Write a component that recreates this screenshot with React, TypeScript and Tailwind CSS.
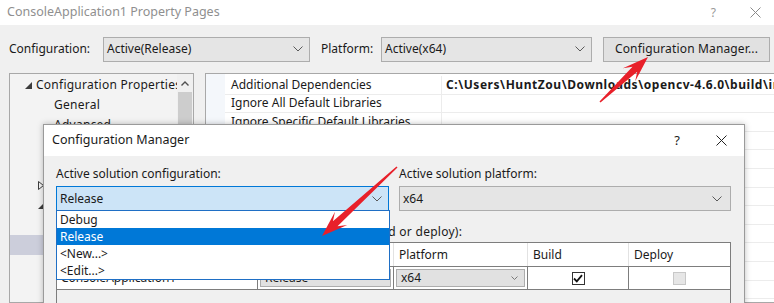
import React from "react"

function Chevron({ small = false }: { small?: boolean }) {
  return small ? (
    <svg width="7" height="4" viewBox="0 0 7 4">
      <path d="M0.5 0.5 L3.5 3.5 L6.5 0.5" fill="none" stroke="#7a7a7a" strokeWidth="1" />
    </svg>
  ) : (
    <svg width="10" height="6" viewBox="0 0 10 6">
      <path d="M0.5 0.5 L5 5 L9.5 0.5" fill="none" stroke="#5a5a5a" strokeWidth="1" />
    </svg>
  )
}

function CloseGlyph({ color }: { color: string }) {
  return (
    <svg width="11" height="11" viewBox="0 0 11 11">
      <path d="M0.5 0.5 L10.5 10.5 M10.5 0.5 L0.5 10.5" stroke={color} strokeWidth="1" />
    </svg>
  )
}

// red markup arrow: thin tail widening into a swept-back head
function arrowPoints(x1: number, y1: number, x2: number, y2: number) {
  const dx = x2 - x1
  const dy = y2 - y1
  const len = Math.hypot(dx, dy)
  const ux = dx / len
  const uy = dy / len
  const nx = -uy
  const ny = ux
  const headLen = 26
  const headW = 9
  const base = { x: x2 - ux * headLen, y: y2 - uy * headLen }
  const neck = { x: x2 - ux * (headLen - 8), y: y2 - uy * (headLen - 8) }
  const pts = [
    [x1 + nx * 0.8, y1 + ny * 0.8],
    [neck.x + nx * 3.4, neck.y + ny * 3.4],
    [base.x + nx * headW, base.y + ny * headW],
    [x2, y2],
    [base.x - nx * headW, base.y - ny * headW],
    [neck.x - nx * 3.4, neck.y - ny * 3.4],
    [x1 - nx * 0.8, y1 - ny * 0.8],
  ]
  return pts.map((p) => p.map((v) => v.toFixed(1)).join(",")).join(" ")
}

const treeRows = [
  { text: "Configuration Properties", pad: "pl-[15px]", icon: "open" },
  { text: "General", pad: "pl-[44px]" },
  { text: "Advanced", pad: "pl-[44px]" },
  { text: "Debugging", pad: "pl-[44px]" },
  { text: "VC++ Directories", pad: "pl-[44px]" },
  { text: "C/C++", pad: "pl-[28px]", icon: "closed" },
  { text: "Linker", pad: "pl-[28px]", icon: "open" },
  { text: "General", pad: "pl-[62px]" },
  { text: "Input", pad: "pl-[62px]", selected: true },
  { text: "Manifest File", pad: "pl-[62px]" },
  { text: "Debugging", pad: "pl-[62px]" },
]

const propRows = [
  { name: "Additional Dependencies", value: "C:\\Users\\HuntZou\\Downloads\\opencv-4.6.0\\build\\include\\opencv_world460.lib" },
  { name: "Ignore All Default Libraries", value: "" },
  { name: "Ignore Specific Default Libraries", value: "" },
  { name: "Module Definition File", value: "" },
  { name: "Add Module to Assembly", value: "" },
  { name: "Embed Managed Resource File", value: "" },
  { name: "Force Symbol References", value: "" },
  { name: "Delay Loaded Dlls", value: "" },
  { name: "Assembly Link Resource", value: "" },
  { name: "", value: "" },
  { name: "", value: "" },
  { name: "", value: "" },
]

function TreeIcon({ kind }: { kind?: string }) {
  if (kind === "open")
    return (
      <span className="flex w-[11px] shrink-0 items-center">
        <svg width="7" height="7" viewBox="0 0 7 7">
          <path d="M7 0 L7 7 L0 7 Z" fill="#3c3c3c" />
        </svg>
      </span>
    )
  if (kind === "closed")
    return (
      <span className="flex w-[16px] shrink-0 items-center">
        <svg width="6" height="9" viewBox="0 0 6 9">
          <path d="M0.5 0.5 L5.5 4.5 L0.5 8.5 Z" fill="none" stroke="#3c3c3c" strokeWidth="1" />
        </svg>
      </span>
    )
  return null
}

export default function App() {
  return (
    <div className="relative h-[303px] w-[774px] overflow-hidden bg-[#f0f0f0] font-['Noto_Sans',sans-serif] text-[12px] text-[#1a1a1a]">
      {/* window title */}
      <div className="flex h-[25px] items-center bg-white pl-[7px] pr-[13px]">
        <span className="text-[12.5px] text-[#8f8f8f]">ConsoleApplication1 Property Pages</span>
        <span className="ml-auto mr-[34px] text-[12px] text-[#999]">?</span>
        <CloseGlyph color="#8a8a8a" />
      </div>

      {/* configuration row */}
      <div className="flex h-[48px] items-center pl-[9px]">
        <span className="w-[94px]">Configuration:</span>
        <div className="flex h-[25px] w-[207px] items-center justify-between border border-[#adadad] bg-[#e5e5e5] pl-[3px] pr-[6px]">
          <span>Active(Release)</span>
          <Chevron />
        </div>
        <span className="ml-[11px] w-[60px]">Platform:</span>
        <div className="flex h-[25px] w-[211px] items-center justify-between border border-[#adadad] bg-[#e5e5e5] pl-[3px] pr-[6px]">
          <span>Active(x64)</span>
          <Chevron />
        </div>
        <button
          type="button"
          className="ml-[11px] flex h-[25px] w-[167px] items-center justify-center border border-[#adadad] bg-[#e1e1e1] tracking-[0.15px]"
        >
          Configuration Manager...
        </button>
      </div>

      {/* panels */}
      <div className="flex h-[230px] pl-[9px]">
        <div className="flex w-[185px] shrink-0 border border-[#a8a8a8] bg-[#f3f3f3]">
          <div className="min-w-0 flex-1 overflow-hidden pt-px">
            {treeRows.map((r, i) => (
              <div
                key={i}
                className={`flex h-[20px] items-center whitespace-nowrap tracking-[0.25px] ${r.pad} ${r.selected ? "bg-[#cccedb]" : ""}`}
              >
                <TreeIcon kind={r.icon} />
                <span>{r.text}</span>
              </div>
            ))}
          </div>
          <div className="flex w-[16px] shrink-0 flex-col bg-[#f0f0f0]">
            <div className="flex h-[18px] items-center justify-center">
              <svg width="8" height="5" viewBox="0 0 8 5">
                <path d="M0.5 4.5 L4 1 L7.5 4.5" fill="none" stroke="#505050" strokeWidth="1.4" />
              </svg>
            </div>
            <div className="mx-px flex-1 bg-[#cdcdcd]" />
          </div>
        </div>

        <div className="ml-[11px] flex w-[600px] shrink-0 border border-[#a8a8a8] bg-white">
          <div className="w-[19px] shrink-0 bg-[#f4f7fb]" />
          <div className="flex-1 pt-[2px]">
            {propRows.map((r, i) => (
              <div key={i} className="flex h-[18.6px] border-b border-[#ececec]">
                <div className="flex w-[216px] shrink-0 items-center pl-[6px] whitespace-nowrap">{r.name}</div>
                <div className="flex flex-1 items-center overflow-hidden border-l border-[#ececec] pl-[4px] font-bold tracking-[0.55px] whitespace-nowrap">
                  {r.value}
                </div>
              </div>
            ))}
          </div>
        </div>
      </div>

      {/* Configuration Manager dialog */}
      <div className="absolute left-[43px] top-[124px] h-[200px] w-[702px] border border-[#9a9a9a] bg-[#f0f0f0] shadow-[0_0_6px_rgba(0,0,0,0.25)]">
        <div className="flex h-[31px] items-center bg-white pl-[8px] pr-[17px]">
          <span className="text-[12.5px]">Configuration Manager</span>
          <span className="ml-auto mr-[36px] text-[13px]">?</span>
          <CloseGlyph color="#222" />
        </div>

        <div className="px-[12px] pt-[10px]">
          <div className="flex gap-[10px]">
            <div className="w-[333px]">
              <div className="h-[16px] leading-[16px]">Active solution configuration:</div>
              <div className="mt-[4px] flex h-[25px] items-center justify-between border border-[#0078d7] bg-[#cce4f7] pl-[3px] pr-[6px]">
                <span>Release</span>
                <Chevron />
              </div>
            </div>
            <div className="w-[332px]">
              <div className="h-[16px] leading-[16px]">Active solution platform:</div>
              <div className="mt-[4px] flex h-[25px] items-center justify-between border border-[#adadad] bg-[#e5e5e5] pl-[3px] pr-[8px]">
                <span>x64</span>
                <Chevron />
              </div>
            </div>
          </div>

          <div className="mt-[13px] h-[16px] leading-[16px] tracking-[0.27px] whitespace-nowrap">
            Project contexts (check the project configurations to build or deploy):
          </div>

          <div className="mt-[2px] h-[80px] w-[675px] border border-[#7d7d7d] bg-[#f0f0f0]">
            <div className="flex h-[24px] border-b border-[#7d7d7d] bg-white">
              <div className="flex w-[201px] items-center border-r border-[#e2e2e2] pl-[5px]">Project</div>
              <div className="flex w-[136px] items-center border-r border-[#e2e2e2] pl-[5px]">Configuration</div>
              <div className="flex w-[134px] items-center border-r border-[#e2e2e2] pl-[5px]">Platform</div>
              <div className="flex w-[101px] items-center border-r border-[#e2e2e2] pl-[5px]">Build</div>
              <div className="flex flex-1 items-center pl-[5px]">Deploy</div>
            </div>
            <div className="flex h-[23px] border-b border-[#7d7d7d] bg-white">
              <div className="flex w-[201px] items-center border-r border-[#7d7d7d] pl-[4px]">ConsoleApplication1</div>
              <div className="flex w-[136px] items-center border-r border-[#7d7d7d] p-[2px]">
                <div className="flex h-full w-full items-center border border-[#adadad] bg-[#e1e1e1] pl-[4px]">Release</div>
              </div>
              <div className="flex w-[134px] items-center border-r border-[#7d7d7d] p-[2px]">
                <div className="flex h-full w-full items-center justify-between border border-[#adadad] bg-[#e1e1e1] pl-[4px] pr-[6px]">
                  <span>x64</span>
                  <Chevron small />
                </div>
              </div>
              <div className="flex w-[101px] items-center justify-center border-r border-[#7d7d7d]">
                <div className="flex h-[13px] w-[13px] items-center justify-center border border-[#333] bg-white">
                  <svg width="10" height="9" viewBox="0 0 10 9">
                    <path d="M1 4.5 L3.8 7.3 L9 1.2" fill="none" stroke="#111" strokeWidth="1.8" />
                  </svg>
                </div>
              </div>
              <div className="flex flex-1 items-center justify-center">
                <div className="h-[13px] w-[13px] border border-[#c8c8c8] bg-[#e6e6e6]" />
              </div>
            </div>
          </div>
        </div>

        {/* opened dropdown list */}
        <div className="absolute left-[12px] top-[85px] w-[334px] border border-[#1f6fc5] bg-white">
          <div className="flex h-[17px] items-center pl-[3px]">Debug</div>
          <div className="flex h-[17px] items-center bg-[#0078d7] pl-[3px] text-white">Release</div>
          <div className="flex h-[17px] items-center pl-[3px]">&lt;New...&gt;</div>
          <div className="flex h-[17px] items-center pl-[3px]">&lt;Edit...&gt;</div>
        </div>
      </div>

      {/* red annotation arrows */}
      <svg className="pointer-events-none absolute inset-0" width="774" height="303" viewBox="0 0 774 303">
        <polygon points={arrowPoints(600, 102, 648, 57)} fill="#e8202a" />
        <polygon points={arrowPoints(397, 167, 322, 236)} fill="#e8202a" />
      </svg>
    </div>
  )
}
